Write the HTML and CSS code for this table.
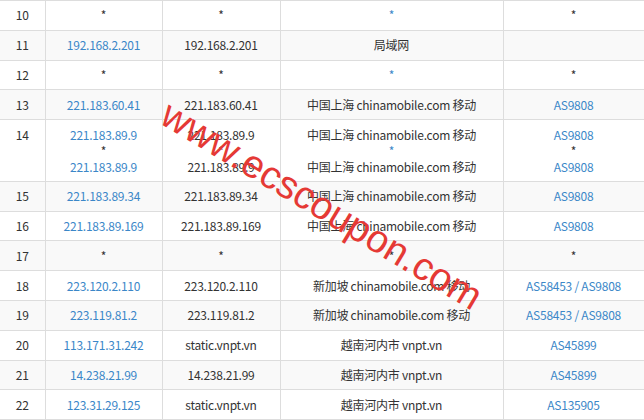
FILE: index.html
```html
<!DOCTYPE html>
<html lang="zh-CN">
<head>
    <meta charset="UTF-8">
    <title>Traceroute</title>
    <link rel="stylesheet" href="styles.css">
</head>
<body>
    <div class="wrap">
        <table class="trace">
            <colgroup>
                <col class="c-hop">
                <col class="c-ip">
                <col class="c-host">
                <col class="c-loc">
                <col class="c-as">
            </colgroup>
            <tr><td>10</td><td>*</td><td>*</td><td class="star-blue">*</td><td>*</td></tr>
            <tr><td>11</td><td class="link">192.168.2.201</td><td>192.168.2.201</td><td>局域网</td><td></td></tr>
            <tr><td>12</td><td>*</td><td>*</td><td class="star-blue">*</td><td>*</td></tr>
            <tr><td>13</td><td class="link">221.183.60.41</td><td>221.183.60.41</td><td>中国上海 chinamobile.com 移动</td><td class="link">AS9808</td></tr>
            <tr>
                <td class="top">14</td>
                <td class="link">221.183.89.9<br><span class="dark">*</span><br>221.183.89.9</td>
                <td>221.183.89.9<br>*<br>221.183.89.9</td>
                <td>中国上海 chinamobile.com 移动<br><span class="link">*</span><br>中国上海 chinamobile.com 移动</td>
                <td class="link">AS9808<br><span class="dark">*</span><br>AS9808</td>
            </tr>
            <tr><td>15</td><td class="link">221.183.89.34</td><td>221.183.89.34</td><td>中国上海 chinamobile.com 移动</td><td class="link">AS9808</td></tr>
            <tr><td>16</td><td class="link">221.183.89.169</td><td>221.183.89.169</td><td>中国上海 chinamobile.com 移动</td><td class="link">AS9808</td></tr>
            <tr><td>17</td><td>*</td><td>*</td><td>*</td><td>*</td></tr>
            <tr><td>18</td><td class="link">223.120.2.110</td><td>223.120.2.110</td><td>新加坡 chinamobile.com 移动</td><td class="link">AS58453 / AS9808</td></tr>
            <tr><td>19</td><td class="link">223.119.81.2</td><td>223.119.81.2</td><td>新加坡 chinamobile.com 移动</td><td class="link">AS58453 / AS9808</td></tr>
            <tr><td>20</td><td class="link">113.171.31.242</td><td>static.vnpt.vn</td><td>越南河内市 vnpt.vn</td><td class="link">AS45899</td></tr>
            <tr><td>21</td><td class="link">14.238.21.99</td><td>14.238.21.99</td><td>越南河内市 vnpt.vn</td><td class="link">AS45899</td></tr>
            <tr><td>22</td><td class="link">123.31.29.125</td><td>static.vnpt.vn</td><td>越南河内市 vnpt.vn</td><td class="link">AS135905</td></tr>
        </table>
        <div class="watermark">www.ecscoupon.com</div>
    </div>
</body>
</html>
```

FILE: styles.css
```css
body {
    margin: 0;
    background: #fff;
    font-family: "Noto Sans CJK SC", "Open Sans", sans-serif;
    font-size: 12px;
    letter-spacing: -0.25px;
    color: #333;
    overflow: hidden;
}
.wrap {
    position: relative;
    width: 644px;
    height: 420px;
    overflow: hidden;
}
.trace {
    width: 644px;
    border-collapse: collapse;
    table-layout: fixed;
}
.c-hop { width: 45px; }
.c-ip { width: 117px; }
.c-host { width: 118px; }
.c-loc { width: 223px; }
.c-as { width: 141px; }
.trace td {
    border: 1px solid #ddd;
    padding: 6.4px 4px;
    line-height: 16px;
    text-align: center;
    vertical-align: top;
    white-space: nowrap;
}
.trace td:first-child {
    border-left: none;
}
.trace tr:nth-child(even) td {
    background: #f9f9f9;
}
.link {
    color: #3b87c8;
}
.dark {
    color: #333;
}
.star-blue {
    color: #3b87c8;
}
.watermark {
    position: absolute;
    left: 322px;
    top: 205px;
    transform: translate(-50%, -50%) rotate(31deg);
    font-family: "Liberation Sans", Arial, sans-serif;
    font-size: 39px;
    letter-spacing: 0;
    color: #e53935;
    white-space: nowrap;
    line-height: 1;
}
```
